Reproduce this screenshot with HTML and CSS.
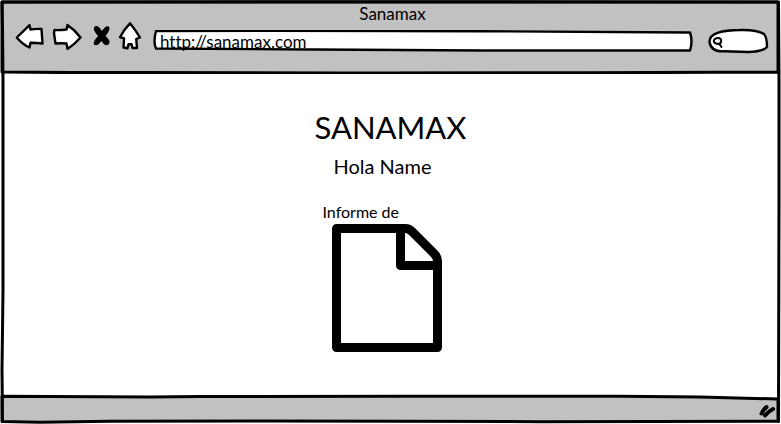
FILE: index.html
```html
<!DOCTYPE html>
<html lang="es">
<head>
<meta charset="utf-8">
<meta name="viewport" content="width=device-width, initial-scale=1">
<title>Sanamax</title>
<link rel="stylesheet" href="styles.css">
</head>
<body>
<div class="window">
  <header class="toolbar">
    <svg class="sketch" viewBox="0 0 781 74" preserveAspectRatio="none" aria-hidden="true">
      <path class="chrome" d="M2 2H778V72.300L715 72.300L587 72.800L340 73L140 72.500L70 72.600L2 72Z"/>
    </svg>
    <div class="window-title">Sanamax</div>
    <nav class="controls">
      <button class="tool" type="button" aria-label="Atrás">
        <svg width="30" height="28" viewBox="15 22 30 28"><path class="line" d="M16.800 37.500L29.500 25.200L30.500 29.500Q36 28.500 41.500 29L42.500 43.500Q36 43 30.500 42.800L29.500 47.500Q22 44 16.800 37.500Z"/></svg>
      </button>
      <button class="tool" type="button" aria-label="Adelante">
        <svg width="32" height="28" viewBox="51 22 32 28"><path class="line" d="M54.500 30Q60 30.300 66.500 29.500L67.500 25Q75 30 80.500 37.500Q75 44 67.500 49L66.500 43.500Q61 43 55.500 43.500Q54.500 37 54 33Z"/></svg>
      </button>
      <button class="tool tool-stop" type="button" aria-label="Detener">
        <svg width="20" height="28" viewBox="92 22 20 28"><path d="M94 27.500Q97 23.500 102 31Q106 24.500 109.300 27Q110.500 30 105.500 36Q111.500 41 108.500 44.500Q105 47 101.500 41Q97 47 94 44.500Q92.500 42 98 36Q93 30.500 94 27.500Z"/></svg>
      </button>
      <button class="tool" type="button" aria-label="Inicio">
        <svg width="26" height="28" viewBox="118 23 26 28"><path class="line" d="M130 24.300Q135.500 31 140 38.500L136.200 40L137 49H132.500L131.500 45.200H128.500L127.500 49.300L123.500 48.500L124 39.500L120 38.200Q123.500 31 130 24.300Z"/></svg>
      </button>
      <div class="address">
        <svg class="sketch" viewBox="0 0 542 22" preserveAspectRatio="none" aria-hidden="true"><path class="line" d="M3 1L120 .900L330 1.200L538 2.500Q541 11 538 20.500L330 20.500L160 19.500L3 18.500Q0 12 3 1Z"/></svg>
        <input class="address-input" type="text" aria-label="Dirección" value="http://sanamax.com">
      </div>
      <div class="search">
        <svg class="sketch" viewBox="708 28 62 26" preserveAspectRatio="none" aria-hidden="true"><path class="line" d="M709.500 42C709 33 723 30 740 30Q757 29.500 764 34Q767 37 767 47Q763 51.500 748 52L724 51.300Q711 52 709.500 42Z"/></svg>
        <svg class="magnifier" width="12" height="14" viewBox="712 35 12 14" aria-hidden="true"><path d="M716 43.500C712 42 714 38 718 38C722.500 38 722 44 718 44L716 43.500M719 43.500L721.500 47"/></svg>
        <input class="search-input" type="search" aria-label="Buscar">
      </div>
    </nav>
  </header>
  <main class="page">
    <h1 class="brand">SANAMAX</h1>
    <p class="greeting">Hola Name</p>
    <figure class="report">
      <figcaption class="report-label">Informe de</figcaption>
      <svg class="document" width="110" height="128" viewBox="332 224 110 128" aria-hidden="true">
        <path d="M336.500 228.500H405.500Q409 228.500 412 231.500L434 253.500Q437.500 257 437.500 261V347.500H336.500ZM400.500 229V265.500H437"/>
      </svg>
    </figure>
  </main>
  <footer class="status">
    <svg class="sketch" viewBox="0 394 781 30" preserveAspectRatio="none" aria-hidden="true">
      <path class="chrome" d="M2 396.200L150 397L200 396.500L400 396.200L620 396.200L700 397L778 399V421.300L540 421.700L400 421.300L260 421L110 421.300L40 422.200L2 421.500Z"/>
    </svg>
    <svg class="grip" width="20" height="16" viewBox="758 403 20 16" aria-hidden="true"><path d="M761.500 413.500Q763 410 766.500 407M765 415.500Q768 411.500 773 409"/></svg>
  </footer>
  <svg class="sketch" viewBox="0 0 781 424" preserveAspectRatio="none" aria-hidden="true">
    <path class="edge" d="M2 2L390 1.800L778.500 2L779 80L779 200L778.500 421.500M2 2L2.500 30L3 80L3 290L2 370L2.500 421.500"/>
  </svg>
</div>
</body>
</html>
```
FILE: styles.css
```css
* {
  box-sizing: border-box;
}

body {
  margin: 0;
  background: #fff;
  color: #000;
  font-family: Lato, "Open Sans", sans-serif;
  font-size: 16px;
  line-height: 20px;
  font-variant-ligatures: none;
}

.window {
  position: relative;
  display: flex;
  flex-direction: column;
  min-height: 100vh;
}

.sketch {
  position: absolute;
  inset: 0;
  width: 100%;
  height: 100%;
  pointer-events: none;
}

.line,
.chrome,
.edge {
  stroke: #000;
  stroke-linejoin: round;
  stroke-linecap: round;
  vector-effect: non-scaling-stroke;
}

.line {
  fill: #fff;
  stroke-width: 2.4;
}

.chrome {
  fill: #c1c1c1;
  stroke-width: 3;
}

.edge {
  fill: none;
  stroke-width: 3;
}

.toolbar {
  position: relative;
  padding: 5px 11px 20px 15px;
  font-size: 17px;
}

.window-title {
  position: relative;
  text-align: center;
  line-height: 17px;
}

.controls {
  position: relative;
  display: flex;
  align-items: flex-end;
  gap: 6px;
}

.tool {
  display: block;
  flex: none;
  margin: 0 0 4px;
  padding: 0;
  border: 0;
  background: none;
}

.tool svg {
  display: block;
}

.tool-stop {
  margin-left: 3px;
}

.address {
  position: relative;
  flex: 1;
  height: 22px;
  margin: 0 8px 2px 3px;
}

.address-input,
.search-input {
  position: relative;
  display: block;
  width: 100%;
  height: 100%;
  border: 0;
  outline: 0;
  background: none;
  color: inherit;
  font: inherit;
  font-variant-ligatures: none;
  appearance: none;
}

.address-input {
  padding: 0 8px 0 7px;
}

.search {
  position: relative;
  flex: none;
  width: 62px;
  height: 26px;
}

.search-input {
  padding: 0 8px 0 18px;
}

.magnifier {
  position: absolute;
  top: 7px;
  left: 4px;
  fill: none;
  stroke: #000;
  stroke-width: 2;
  stroke-linecap: round;
}

.page {
  flex: 1;
  display: flex;
  flex-direction: column;
  align-items: center;
  padding: 35px 16px 32px;
}

.brand {
  margin: 0;
  font-size: 31px;
  font-weight: 400;
  line-height: 36px;
}

.greeting {
  margin: 9px 16px 0 0;
  font-size: 20px;
  line-height: 24px;
}

.report {
  margin: 24px 16px 0 0;
  padding-right: 1px;
}

.report-label {
  line-height: 20px;
}

.document {
  display: block;
  margin: 2px 0 0 9px;
  fill: none;
  stroke: #000;
  stroke-width: 9;
  stroke-linejoin: round;
}

.status {
  position: relative;
  display: flex;
  justify-content: flex-end;
  height: 30px;
  padding: 9px 3px 5px;
}

.grip {
  position: relative;
  fill: none;
  stroke: #000;
  stroke-width: 4;
  stroke-linecap: round;
}
```
